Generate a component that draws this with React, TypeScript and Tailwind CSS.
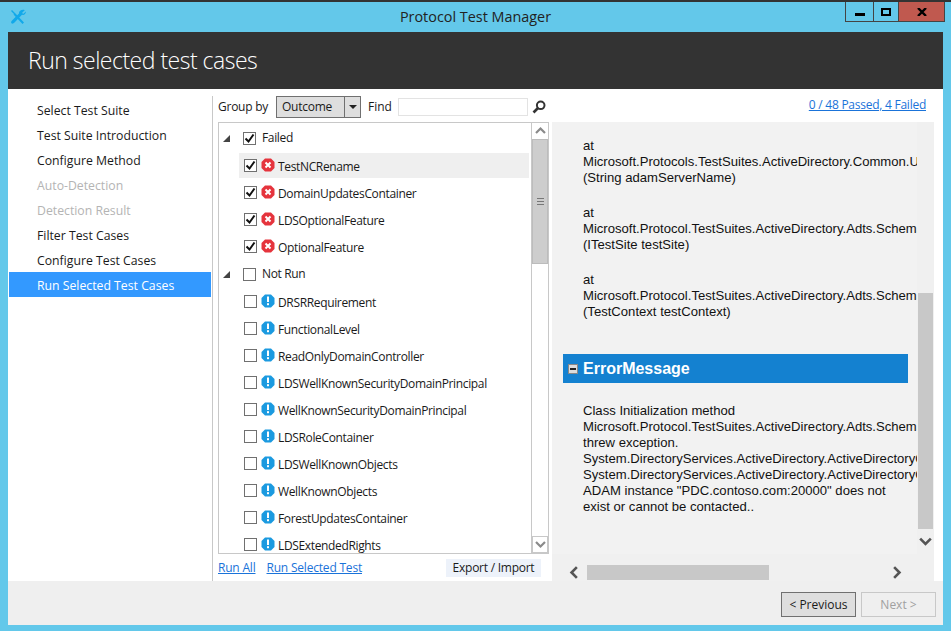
const navItems = [
  { label: 'Select Test Suite' },
  { label: 'Test Suite Introduction' },
  { label: 'Configure Method' },
  { label: 'Auto-Detection', disabled: true },
  { label: 'Detection Result', disabled: true },
  { label: 'Filter Test Cases' },
  { label: 'Configure Test Cases' },
  { label: 'Run Selected Test Cases', active: true },
];

const failedCases = ['TestNCRename', 'DomainUpdatesContainer', 'LDSOptionalFeature', 'OptionalFeature'];
const notRunCases = [
  'DRSRRequirement',
  'FunctionalLevel',
  'ReadOnlyDomainController',
  'LDSWellKnownSecurityDomainPrincipal',
  'WellKnownSecurityDomainPrincipal',
  'LDSRoleContainer',
  'LDSWellKnownObjects',
  'WellKnownObjects',
  'ForestUpdatesContainer',
  'LDSExtendedRights',
];

const stackLines = [
  ['at', 'Microsoft.Protocols.TestSuites.ActiveDirectory.Common.Utilities', '(String adamServerName)'],
  ['at', 'Microsoft.Protocol.TestSuites.ActiveDirectory.Adts.Schema.Initialize', '(ITestSite testSite)'],
  ['at', 'Microsoft.Protocol.TestSuites.ActiveDirectory.Adts.Schema.ClassInitialize', '(TestContext testContext)'],
];

const errorLines = [
  'Class Initialization method',
  'Microsoft.Protocol.TestSuites.ActiveDirectory.Adts.Schema.ClassInitialize',
  'threw exception.',
  'System.DirectoryServices.ActiveDirectory.ActiveDirectoryObjectNotFoundException:',
  'System.DirectoryServices.ActiveDirectory.ActiveDirectoryObjectNotFoundException:',
  'ADAM instance "PDC.contoso.com:20000" does not',
  'exist or cannot be contacted..',
];

function Octagon({ color, kind }: { color: string; kind: 'error' | 'info' }) {
  return (
    <svg width="14" height="14" viewBox="0 0 14 14" className="shrink-0 block">
      <polygon points="4,0.5 10,0.5 13.5,4 13.5,10 10,13.5 4,13.5 0.5,10 0.5,4" fill={color} />
      {kind === 'error' ? (
        <path d="M4.500 4.500l5 5M9.500 4.500l-5 5" stroke="#fff" strokeWidth="2" />
      ) : (
        <>
          <rect x="6" y="2.500" width="2" height="5.500" fill="#fff" />
          <rect x="6" y="9.200" width="2" height="2" fill="#fff" />
        </>
      )}
    </svg>
  );
}

function Checkbox({ checked }: { checked?: boolean }) {
  return (
    <span className="w-[13px] h-[13px] border border-[#707070] bg-white flex items-center justify-center shrink-0">
      {checked && (
        <svg width="11" height="11" viewBox="0 0 11 11">
          <path d="M1.500 5.500l3 3 5-7" fill="none" stroke="#111" strokeWidth="2" />
        </svg>
      )}
    </span>
  );
}

function GroupRow({ label, checked }: { label: string; checked?: boolean }) {
  return (
    <div className="h-[26px] mb-[2px] flex items-center shrink-0">
      <svg width="7" height="7" viewBox="0 0 7 7" className="ml-[4px] mr-[13px] shrink-0">
        <polygon points="7,0 7,7 0,7" fill="#444" />
      </svg>
      <Checkbox checked={checked} />
      <span className="ml-[6px]">{label}</span>
    </div>
  );
}

function CaseRow({ label, checked, selected, kind }: { label: string; checked?: boolean; selected?: boolean; kind: 'error' | 'info' }) {
  return (
    <div className="h-[27px] shrink-0">
      <div className={`h-[25px] ml-[20px] mr-[2px] flex items-center pl-[5px] ${selected ? 'bg-[#efefef]' : ''}`}>
        <Checkbox checked={checked} />
        <span className="ml-[4px] -mt-[2px]">
          <Octagon color={kind === 'error' ? '#e5343d' : '#1b9ae0'} kind={kind} />
        </span>
        <span className="ml-[3px] mt-[3px]">{label}</span>
      </div>
    </div>
  );
}

function Chevron({ dir, size = 11 }: { dir: 'up' | 'down' | 'left' | 'right'; size?: number }) {
  const paths = {
    up: 'M1 7l4.500-4.500L10 7',
    down: 'M1 3l4.500 4.500L10 3',
    left: 'M7.500 1L3 5.500 7.500 10',
    right: 'M3.500 1L8 5.500 3.500 10',
  };
  return (
    <svg width={size} height={size} viewBox="0 0 11 11">
      <path d={paths[dir]} fill="none" stroke="currentColor" strokeWidth="2.200" />
    </svg>
  );
}

export default function App() {
  return (
    <div className="w-[951px] h-[631px] bg-[#63c8ea] flex flex-col overflow-hidden font-['Open_Sans',sans-serif] text-[12px] text-[#1a1a1a]">
      <div className="h-[2px] bg-[#333] shrink-0" />
      {/* Title bar */}
      <div className="h-[30px] shrink-0 flex items-start">
        <svg width="16" height="16" viewBox="0 0 16 16" className="ml-[10px] mt-[7px] shrink-0">
          <path d="M2 1l3 3-1 1-3-3zM5 4l9 9.500-1.500 1.500L3.500 5.500z" fill="#12a9ea" />
          <path d="M14.800 1.200l-2.500 2.300 .2 1 1 .2 2.300-2.300c.4 2-1.500 4-3.800 3.400L4.500 13.500c-.8 1-2.300 1.500-3 .8-.8-.8-.2-2.200.8-3L9 4.500C8.500 2.200 11.800 0 14.800 1.200z" fill="#12a9ea" />
        </svg>
        <div className="flex-1 text-center text-[14.400px] leading-[30px] pl-[80px] text-[#222]">Protocol Test Manager</div>
        <div className="flex h-[20px] w-[100px] mr-[6px] border border-t-0 border-[#444] shrink-0">
          <div className="w-[28px] border-r border-[#444] flex items-center justify-center">
            <span className="w-[10px] h-[3px] bg-black mt-[5px]" />
          </div>
          <div className="w-[25px] border-r border-[#444] flex items-center justify-center">
            <span className="w-[10px] h-[8px] border-2 border-black" />
          </div>
          <div className="flex-1 bg-[#c0594f] flex items-center justify-center">
            <svg width="10" height="8" viewBox="0 0 10 8">
              <path d="M1 0l8 8M9 0L1 8" stroke="#000" strokeWidth="2.400" />
            </svg>
          </div>
        </div>
      </div>

      <div className="flex-1 flex flex-col min-h-0 ml-[8px] mr-[8px] mb-[6px]">
        {/* Header */}
        <div className="h-[57px] bg-[#333] shrink-0 pl-[20px] text-white text-[23px] tracking-[-0.5px] font-light leading-[57px]">Run selected test cases</div>

        {/* Body */}
        <div className="flex-1 flex min-h-0 bg-white">
          {/* Step list */}
          <div className="w-[205px] shrink-0 pt-[7px] pl-[1px] flex flex-col text-[12.250px]">
            <div className="flex-1 pt-[2px] border-r border-[#c8c8c8]">
              {navItems.map((item) => (
                <div
                  key={item.label}
                  className={`h-[25px] pl-[28px] w-[202px] ${item.active ? 'bg-[#3399ff] text-white -mt-[1px] leading-[27px]' : item.disabled ? 'text-[#b4b4b4] leading-[25px]' : 'leading-[25px]'}`}
                >
                  {item.label}
                </div>
              ))}
            </div>
          </div>

          {/* Test case list */}
          <div className="w-[336px] shrink-0 pl-[5px] flex flex-col tracking-[-0.35px]">
            <div className="h-[33px] flex items-center shrink-0 pt-[3px]">
              <span className="w-[50px] whitespace-nowrap tracking-[-0.25px]">Group by</span>
              <div className="ml-[8px] w-[85px] h-[22px] border border-[#707070] bg-[#dedede] flex tracking-[-0.25px]">
                <span className="flex-1 pl-[5px] leading-[20px]">Outcome</span>
                <span className="w-[16px] border-l border-[#707070] flex items-center justify-center">
                  <span className="border-x-[4px] border-x-transparent border-t-[4px] border-t-[#222]" />
                </span>
              </div>
              <span className="ml-[7px] w-[22px] tracking-normal">Find</span>
              <div className="ml-[8px] w-[130px] h-[18px] border border-[#e3e3e3] bg-white" />
              <svg width="14" height="14" viewBox="0 0 14 14" className="ml-[4px]">
                <circle cx="8.700" cy="5.300" r="3.800" fill="none" stroke="#333" strokeWidth="2" />
                <path d="M6 8L1.500 12.500" stroke="#333" strokeWidth="2.600" />
              </svg>
            </div>

            <div className="w-[331px] h-[432px] border border-[#c8c8c8] flex shrink-0">
              <div className="flex-1 min-w-0 overflow-hidden flex flex-col pt-[2px]">
                <GroupRow label="Failed" checked />
                {failedCases.map((name, i) => (
                  <CaseRow key={name} label={name} checked selected={i === 0} kind="error" />
                ))}
                <GroupRow label="Not Run" />
                {notRunCases.map((name) => (
                  <CaseRow key={name} label={name} kind="info" />
                ))}
              </div>
              <div className="w-[17px] shrink-0 border-l border-[#c8c8c8] flex flex-col text-[#8a8a8a]">
                <div className="h-[16px] flex items-center justify-center">
                  <Chevron dir="up" />
                </div>
                <div className="h-[125px] bg-[#cdcdcd] border border-[#bcbcbc] flex flex-col items-center justify-center gap-[2px]">
                  <span className="w-[7px] h-[1px] bg-[#777]" />
                  <span className="w-[7px] h-[1px] bg-[#777]" />
                  <span className="w-[7px] h-[1px] bg-[#777]" />
                </div>
                <div className="flex-1" />
                <div className="h-[17px] border border-[#c8c8c8] flex items-center justify-center">
                  <Chevron dir="down" />
                </div>
              </div>
            </div>

            <div className="flex items-center h-[27px] shrink-0 tracking-[-0.2px]">
              <a className="text-[#1a73d9] underline">Run All</a>
              <a className="text-[#1a73d9] underline ml-[11px]">Run Selected Test</a>
              <span className="ml-[84px] w-[95px] h-[18px] bg-[#edf2fa] text-center leading-[18px] tracking-[-0.25px]">Export / Import</span>
            </div>
          </div>

          {/* Result pane */}
          <div className="flex-1 min-w-0 pl-[3px] flex flex-col">
            <div className="h-[33px] shrink-0 flex justify-end pr-[17px] pt-[7px] text-[#1a73d9] tracking-[-0.25px]">
              <a className="underline">0 / 48 Passed, 4 Failed</a>
            </div>
            <div className="w-[382px] flex-1 min-h-0 bg-[#f2f2f2] flex flex-col font-['Liberation_Sans',sans-serif] text-[13.100px] leading-[16px] text-[#111]">
              <div className="flex-1 min-h-0 flex">
                <div className="w-[365px] overflow-hidden pl-[11px]">
                  <div className="pl-[20px] pt-[16px] whitespace-nowrap">
                    {stackLines.map((lines) => (
                      <div key={lines[1]} className="mb-[19px]">
                        {lines.map((line) => (
                          <div key={line}>{line}</div>
                        ))}
                      </div>
                    ))}
                  </div>
                  <div className="w-[345px] h-[29px] mt-[34px] bg-[#1481d0] flex items-center pl-[5px] text-white text-[16px] font-bold">
                    <span className="w-[10px] h-[10px] bg-[#dcdcdc] border border-[#888] flex items-center justify-center mr-[5px]">
                      <span className="w-[6px] h-[2px] bg-[#222]" />
                    </span>
                    ErrorMessage
                  </div>
                  <div className="pl-[20px] pt-[20px] whitespace-nowrap">
                    {errorLines.map((line, i) => (
                      <div key={i}>{line}</div>
                    ))}
                  </div>
                </div>
                <div className="w-[17px] shrink-0 flex flex-col text-[#555] bg-[#f0f0f0]">
                  <div className="h-[171px]" />
                  <div className="h-[237px] w-[15px] bg-[#c8c8c8] ml-[1px]" />
                  <div className="h-[25px] flex items-center justify-center">
                    <Chevron dir="down" size={13} />
                  </div>
                </div>
              </div>
              <div className="h-[27px] shrink-0 flex items-end text-[#555] pb-[1px] bg-[#f0f0f0]">
                <span className="w-[16px] h-[15px] ml-[14px] flex items-center justify-center">
                  <Chevron dir="left" size={13} />
                </span>
                <span className="w-[182px] h-[15px] ml-[5px] bg-[#c8c8c8]" />
                <span className="ml-[119px] w-[16px] h-[15px] flex items-center justify-center">
                  <Chevron dir="right" size={13} />
                </span>
              </div>
            </div>
          </div>
        </div>

        {/* Footer */}
        <div className="h-[44px] shrink-0 bg-[#efefef] flex items-start justify-end pt-[11px] pr-[7px] gap-[5px]">
          <button className="w-[75px] h-[25px] border border-[#707070] bg-[#dedede]">&lt; Previous</button>
          <button className="w-[75px] h-[25px] border border-[#c8c8c8] text-[#a0a0a0]">Next &gt;</button>
        </div>
      </div>
    </div>
  );
}
